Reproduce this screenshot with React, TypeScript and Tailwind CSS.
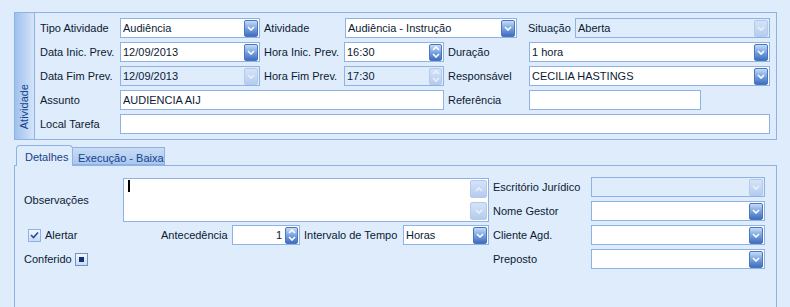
import React from "react";

// Office 2007 blue skin colours
const PANEL = "bg-[#dfecfb]";

function Chevron({ up = false, color = "#ffffff" }: { up?: boolean; color?: string }) {
  return (
    <svg width="8" height="5" viewBox="0 0 8 5">
      <path d={up ? "M1 4 L4 1 L7 4" : "M1 1 L4 4 L7 1"} fill="none" stroke={color} strokeWidth="1.6" />
    </svg>
  );
}

function DropBtn({ disabled }: { disabled?: boolean }) {
  return (
    <div
      className={`w-[14px] h-[17px] shrink-0 rounded-[2px] border flex items-center justify-center ${
        disabled
          ? "border-[#b3caec] bg-linear-to-b from-[#d5e3f8] to-[#b6ccee]"
          : "border-[#4a76bd] bg-linear-to-b from-[#c6dbf8] via-[#78a2e0] to-[#3f6ebf]"
      }`}
    >
      <Chevron color={disabled ? "#e9f1fc" : "#ffffff"} />
    </div>
  );
}

function SpinBtn({ disabled }: { disabled?: boolean }) {
  return (
    <div
      className={`w-[13px] h-[17px] shrink-0 rounded-[2px] border flex flex-col items-center justify-center gap-[2px] ${
        disabled
          ? "border-[#b3caec] bg-linear-to-b from-[#d5e3f8] to-[#b6ccee]"
          : "border-[#4a76bd] bg-linear-to-b from-[#c6dbf8] via-[#78a2e0] to-[#3f6ebf]"
      }`}
    >
      <Chevron up color={disabled ? "#e9f1fc" : "#ffffff"} />
      <Chevron color={disabled ? "#e9f1fc" : "#ffffff"} />
    </div>
  );
}

function Combo({ w, value, disabled }: { w: string; value?: string; disabled?: boolean }) {
  return (
    <div
      className={`${w} h-[20px] shrink-0 border border-[#8db2e3] ${disabled ? PANEL : "bg-white"} flex items-center pl-[2px] pr-px`}
    >
      <span className="flex-1 truncate">{value}</span>
      <DropBtn disabled={disabled} />
    </div>
  );
}

function Spin({ w, value, disabled, right }: { w: string; value?: string; disabled?: boolean; right?: boolean }) {
  return (
    <div
      className={`${w} h-[20px] shrink-0 border border-[#8db2e3] ${disabled ? PANEL : "bg-white"} flex items-center pl-[2px] pr-px`}
    >
      <span className={`flex-1 truncate ${right ? "text-right pr-[3px]" : ""}`}>{value}</span>
      <SpinBtn disabled={disabled} />
    </div>
  );
}

function TextBox({ w, value }: { w: string; value?: string }) {
  return (
    <div className={`${w} h-[20px] shrink-0 border border-[#8db2e3] bg-white flex items-center pl-[2px]`}>
      {value}
    </div>
  );
}

function Label({ w, children, pl = "" }: { w: string; children: React.ReactNode; pl?: string }) {
  return <div className={`${w} ${pl} shrink-0 whitespace-nowrap`}>{children}</div>;
}

export default function App() {
  return (
    <div
      className={`w-[790px] h-[307px] ${PANEL} overflow-hidden text-[11px] leading-none text-[#0b1a33] font-['Liberation_Sans',Arial,sans-serif]`}
    >
      {/* Atividade group */}
      <div className="pt-[12px] pl-[14px] w-[777px]">
        <div className="h-[128px] border border-[#8db2e3] flex">
          <div className="w-[20px] border-r border-[#8db2e3] bg-linear-to-r from-[#9fc0ee] to-[#d5e5f9] flex items-end justify-center pb-[10px]">
            <span className="[writing-mode:vertical-rl] rotate-180 text-[#15428b]">Atividade</span>
          </div>
          <div className="pl-[5px] pt-[5px] flex flex-col gap-[4px]">
            <div className="flex items-center">
              <Label w="w-[80px]">Tipo Atividade</Label>
              <Combo w="w-[140px]" value="Audiência" />
              <Label w="w-[85px]" pl="pl-[4px]">Atividade</Label>
              <Combo w="w-[172px]" value="Audiência - Instrução" />
              <Label w="w-[58px]" pl="pl-[11px]">Situação</Label>
              <Combo w="w-[195px]" value="Aberta" disabled />
            </div>
            <div className="flex items-center">
              <Label w="w-[80px]">Data Inic. Prev.</Label>
              <Combo w="w-[140px]" value="12/09/2013" />
              <Label w="w-[84px]" pl="pl-[4px]">Hora Inic. Prev.</Label>
              <Spin w="w-[100px]" value="16:30" />
              <Label w="w-[85px]" pl="pl-[4px]">Duração</Label>
              <Combo w="w-[241px]" value="1 hora" />
            </div>
            <div className="flex items-center">
              <Label w="w-[80px]">Data Fim Prev.</Label>
              <Combo w="w-[140px]" value="12/09/2013" disabled />
              <Label w="w-[84px]" pl="pl-[4px]">Hora Fim Prev.</Label>
              <Spin w="w-[100px]" value="17:30" disabled />
              <Label w="w-[85px]" pl="pl-[4px]">Responsável</Label>
              <Combo w="w-[241px]" value="CECILIA HASTINGS" />
            </div>
            <div className="flex items-center">
              <Label w="w-[80px]">Assunto</Label>
              <TextBox w="w-[324px]" value="AUDIENCIA AIJ" />
              <Label w="w-[85px]" pl="pl-[4px]">Referência</Label>
              <TextBox w="w-[172px]" />
            </div>
            <div className="flex items-center">
              <Label w="w-[80px]">Local Tarefa</Label>
              <TextBox w="w-[650px]" />
            </div>
          </div>
        </div>
      </div>

      {/* Tabs */}
      <div className="mt-[5px] pl-[14px] w-[777px]">
        <div className="flex items-end pl-[2px] h-[20px]">
          <div className="relative z-10 -mb-px h-[21px] w-[57px] border border-b-0 border-[#8db2e3] rounded-t-[4px] bg-[#dfecfb] pl-[8px] pt-[6px] text-[#15428b]">
            Detalhes
          </div>
          <div className="h-[18px] w-[92px] border border-l-0 border-[#8db2e3] bg-linear-to-b from-[#c9dcf6] to-[#aac7ef] pl-[5px] pt-[5px] text-[#15428b] whitespace-nowrap">
            Execução - Baixa
          </div>
        </div>
        <div className="h-[150px] border border-b-0 border-[#8db2e3] pt-[11px] pl-[9px] flex">
          {/* left column */}
          <div className="w-[465px] pt-px flex flex-col">
            <div className="flex h-[44px]">
              <div className="w-[99px] flex items-center">Observações</div>
              <div className="w-[366px] h-[44px] border border-[#8db2e3] bg-white flex pl-[4px] pt-px pr-px">
                <div className="flex-1">
                  <div className="w-[2px] h-[12px] bg-black" />
                </div>
                <div className="flex flex-col justify-between pb-px">
                  <div className="w-[17px] h-[18px] rounded-[2px] border border-[#b3caec] bg-linear-to-b from-[#d5e3f8] to-[#b6ccee] flex items-center justify-center">
                    <Chevron up color="#e9f1fc" />
                  </div>
                  <div className="w-[17px] h-[18px] rounded-[2px] border border-[#b3caec] bg-linear-to-b from-[#d5e3f8] to-[#b6ccee] flex items-center justify-center">
                    <Chevron color="#e9f1fc" />
                  </div>
                </div>
              </div>
            </div>
            <div className="mt-[3px] flex items-center h-[20px]">
              <div className="w-[137px] flex items-center pl-[4px] gap-[4px]">
                <div className="w-[13px] h-[13px] border border-[#8db2e3] bg-linear-to-b from-[#f4f8fe] to-[#c8dbf5] flex items-center justify-center">
                  <svg width="9" height="8" viewBox="0 0 9 8">
                    <path d="M1 4 L3.5 6.5 L8 1.5" fill="none" stroke="#1f4f9a" strokeWidth="1.6" />
                  </svg>
                </div>
                <span>Alertar</span>
              </div>
              <Label w="w-[71px]">Antecedência</Label>
              <Spin w="w-[68px]" value="1" right />
              <Label w="w-[103px]" pl="pl-[4px]">Intervalo de Tempo</Label>
              <Combo w="w-[86px]" value="Horas" />
            </div>
            <div className="mt-[4px] flex items-center h-[20px]">
              <Label w="w-[51px]">Conferido</Label>
              <div className="w-[13px] h-[13px] border border-[#6f93c9] bg-linear-to-b from-[#f4f8fe] to-[#c8dbf5] flex items-center justify-center">
                <div className="w-[5px] h-[5px] bg-[#15307a]" />
              </div>
            </div>
          </div>
          {/* right column */}
          <div className="ml-[4px] flex flex-col gap-[4px]">
            <div className="flex items-center">
              <Label w="w-[98px]">Escritório Jurídico</Label>
              <Combo w="w-[174px]" disabled />
            </div>
            <div className="flex items-center">
              <Label w="w-[98px]">Nome Gestor</Label>
              <Combo w="w-[174px]" />
            </div>
            <div className="flex items-center">
              <Label w="w-[98px]">Cliente Agd.</Label>
              <Combo w="w-[174px]" />
            </div>
            <div className="flex items-center">
              <Label w="w-[98px]">Preposto</Label>
              <Combo w="w-[174px]" />
            </div>
          </div>
        </div>
      </div>
    </div>
  );
}
